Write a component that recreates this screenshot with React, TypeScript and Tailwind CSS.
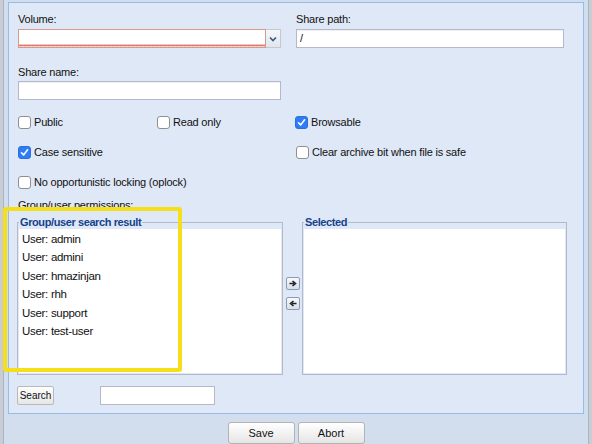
import React from "react";

const font = { fontFamily: '"Liberation Sans", Arial, sans-serif' };

function Check({ checked }: { checked?: boolean }) {
  return checked ? (
    <span className="w-[13px] h-[13px] rounded-[3px] bg-[#2f7cf6] border border-[#2a6fe0] flex items-center justify-center shrink-0">
      <svg width="9" height="9" viewBox="0 0 9 9">
        <path d="M1.5 4.8 L3.6 6.9 L7.6 1.8" stroke="#fff" strokeWidth="1.6" fill="none" strokeLinecap="round" strokeLinejoin="round" />
      </svg>
    </span>
  ) : (
    <span className="w-[13px] h-[13px] rounded-[3px] bg-white border border-[#8f8f8f] shrink-0" />
  );
}

function CheckItem({ checked, label, w }: { checked?: boolean; label: string; w?: string }) {
  return (
    <div className={`flex items-center gap-[3px] h-[14px] ${w ?? ""}`}>
      <Check checked={checked} />
      <span className="text-[11px] tracking-[-0.2px] leading-[14px] text-[#111]">{label}</span>
    </div>
  );
}

const users = ["admin", "admini", "hmazinjan", "rhh", "support", "test-user"];

function ArrowBtn({ dir }: { dir: "r" | "l" }) {
  return (
    <div className="w-[14px] h-[13px] rounded-[2px] border border-[#8a9bb3] bg-gradient-to-b from-[#f7f9fc] to-[#d7dfea] flex items-center justify-center">
      <svg width="8" height="7" viewBox="0 0 8 7">
        {dir === "r" ? (
          <path d="M0.5 3.5 H5 M3.5 1 L6.5 3.5 L3.5 6" stroke="#222" strokeWidth="1.6" fill="none" />
        ) : (
          <path d="M7.5 3.5 H3 M4.5 1 L1.5 3.5 L4.5 6" stroke="#222" strokeWidth="1.6" fill="none" />
        )}
      </svg>
    </div>
  );
}

export default function App() {
  return (
    <div className="w-[592px] h-[444px] overflow-hidden bg-[#c9cdd2] relative flex" style={font}>
      <div className="ml-[3px] w-[586px] h-full bg-[#d2deee] border-l border-r border-[#a3b6cc] flex flex-col px-[4px] pt-[2px]">
        <div className="h-[416px] bg-[#dfe8f6] border border-[#99bbe8] pl-[9px] pt-[9px] flex flex-col">
          {/* row 1 */}
          <div className="flex gap-[15px]">
            <div className="w-[263px] flex flex-col">
              <div className="text-[11px] tracking-[-0.2px] leading-[14px] text-[#111]">Volume:</div>
              <div className="mt-[3px] flex h-[19px]">
                <div className="relative flex-1 bg-white border border-[#d39a8e] overflow-hidden">
                  <svg className="absolute left-0 bottom-0" width="248" height="3" viewBox="0 0 248 3" preserveAspectRatio="none">
                    <defs>
                      <pattern id="wv" width="4" height="3" patternUnits="userSpaceOnUse">
                        <path d="M0 2.5 L1 0.5 L2 2.5 L3 0.5 L4 2.5" stroke="#d9534a" strokeWidth="0.8" fill="none" />
                      </pattern>
                    </defs>
                    <rect width="248" height="3" fill="url(#wv)" />
                  </svg>
                </div>
                <div className="w-[15px] h-[19px] bg-gradient-to-b from-[#f5f7fa] to-[#e1e6ee] border border-l-0 border-[#c3c8d3] flex items-center justify-center">
                  <svg width="8" height="6" viewBox="0 0 8 6">
                    <path d="M1 1.5 L4 4.5 L7 1.5" stroke="#3f5a7e" strokeWidth="1.7" fill="none" />
                  </svg>
                </div>
              </div>
            </div>
            <div className="w-[268px] flex flex-col">
              <div className="text-[11px] tracking-[-0.2px] leading-[14px] text-[#111]">Share path:</div>
              <div className="mt-[3px] h-[19px] bg-white border border-[#b5b8c8] text-[11px] leading-[17px] pl-[3px] text-[#111] shadow-[inset_0_1px_1px_rgba(0,0,0,0.06)]">/</div>
            </div>
          </div>
          {/* row 2 */}
          <div className="mt-[17px] text-[11px] tracking-[-0.2px] leading-[14px] text-[#111]">Share name:</div>
          <div className="mt-[2px] w-[263px] h-[19px] bg-white border border-[#b5b8c8] shadow-[inset_0_1px_1px_rgba(0,0,0,0.06)]" />
          {/* checkboxes */}
          <div className="mt-[15px] flex">
            <CheckItem label="Public" w="w-[139px]" />
            <CheckItem label="Read only" w="w-[138px]" />
            <CheckItem label="Browsable" checked />
          </div>
          <div className="mt-[16px] flex">
            <CheckItem label="Case sensitive" checked w="w-[278px]" />
            <CheckItem label="Clear archive bit when file is safe" />
          </div>
          <div className="mt-[16px] flex">
            <CheckItem label="No opportunistic locking (oplock)" />
          </div>
          <div className="mt-[9px] text-[11px] tracking-[-0.2px] leading-[14px] text-[#111]">Group/user permissions:</div>
          {/* fieldsets */}
          <div className="mt-[3px] -ml-[1px] flex">
            <fieldset className="w-[266px] h-[160px] border border-[#b5b8c8] px-0 flex flex-col">
              <legend className="ml-[1px] px-[1px] text-[11px] font-bold leading-[14px] text-[#15428b] tracking-[-0.4px]">
                Group/user search result
              </legend>
              <div className="h-[144px] mx-[1px] bg-white pl-[3px] pt-[1px]">
                {users.map((u) => (
                  <div key={u} className="text-[11.5px] leading-[18.4px] text-[#111] tracking-[-0.3px]">
                    User: {u}
                  </div>
                ))}
              </div>
            </fieldset>
            <div className="w-[19px] flex flex-col items-center pt-[62px] gap-[7px]">
              <ArrowBtn dir="r" />
              <ArrowBtn dir="l" />
            </div>
            <fieldset className="w-[265px] h-[160px] border border-[#b5b8c8] px-0 flex flex-col">
              <legend className="ml-[1px] px-[1px] text-[11px] font-bold leading-[14px] text-[#15428b] tracking-[-0.4px]">
                Selected
              </legend>
              <div className="h-[144px] mx-[1px] bg-white" />
            </fieldset>
          </div>
          {/* search row */}
          <div className="mt-[11px] -ml-[1px] flex items-center">
            <div className="w-[37px] h-[19px] rounded-[2px] border border-[#b9b9b9] bg-gradient-to-b from-[#ffffff] to-[#e6e6e6] text-[10px] leading-[17px] text-center text-[#111]">
              Search
            </div>
            <div className="ml-[46px] w-[115px] h-[19px] bg-white border border-[#b5b8c8]" />
          </div>
        </div>
        {/* footer */}
        <div className="flex justify-center gap-[3px] pt-[8px]">
          <div className="w-[67px] h-[22px] rounded-[3px] border border-[#b3b3b3] bg-gradient-to-b from-[#ffffff] to-[#e5e5e5] text-[11px] leading-[20px] text-center text-[#111]">
            Save
          </div>
          <div className="w-[67px] h-[22px] rounded-[3px] border border-[#b3b3b3] bg-gradient-to-b from-[#ffffff] to-[#e5e5e5] text-[11px] leading-[20px] text-center text-[#111]">
            Abort
          </div>
        </div>
      </div>
      {/* yellow highlight */}
      <div className="absolute left-[3px] top-[207px] w-[179px] h-[165px] border-[4px] border-[#f5df1b] rounded-[3px]" />
    </div>
  );
}
